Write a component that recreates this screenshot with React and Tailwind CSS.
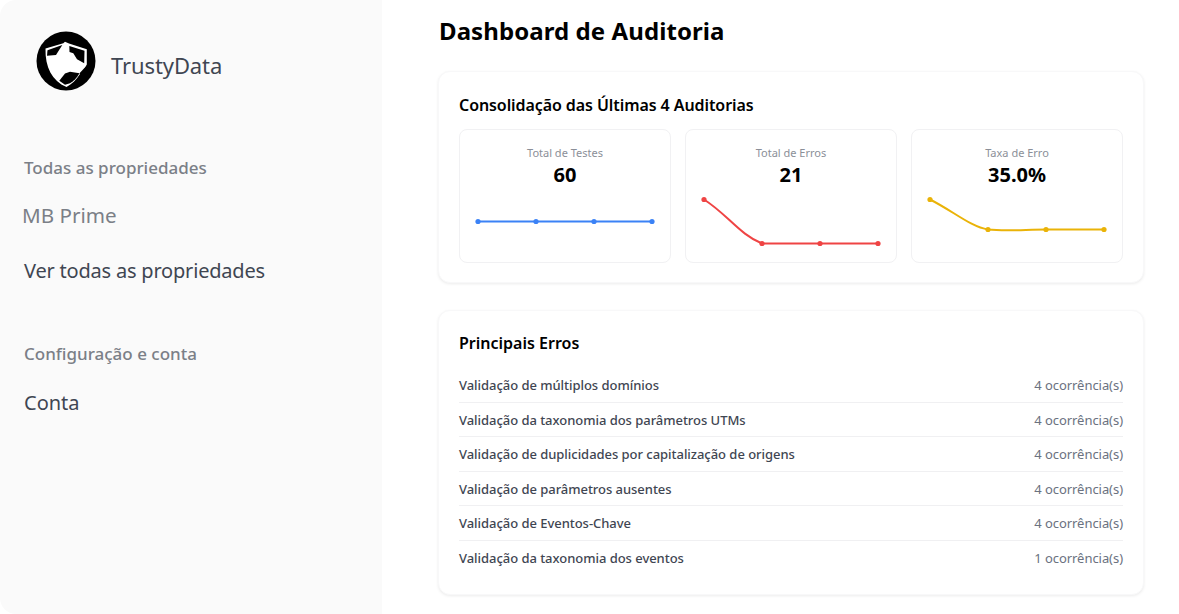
const font = { fontFamily: '"Noto Sans", "Open Sans", sans-serif' };

function Logo() {
  return (
    <svg width="60" height="60" viewBox="0 0 60 60" className="shrink-0">
      <circle cx="30" cy="30" r="29.5" fill="#000" />
      <path d="M9.5 17.5 L27.3 12.3 L29 10.8 L33 12.5 L50.8 18.3 L50.8 33.5 C49 38 46 41 44 43 C40 49 36 53 30.5 56 C16 50 9 36 9.5 17.5 Z" fill="#fff" />
      <path d="M11.5 19.2 L26.3 14 L20 24 L11 24.8 Z" fill="#000" />
      <path d="M33.3 15 L48.5 19.8 L48.2 32.3 L41 28.3 L37.3 22.3 L33.5 21 Z" fill="#000" />
      <path d="M23.3 49.7 L29 42.6 L34 40.8 L43.5 42.3 C41 47 37.5 50.5 34 52.3 L29 53.7 Z" fill="#000" />
      <path d="M43.5 42.3 L50.8 34.5 L52 36 L46 46 Z" fill="#000" />
    </svg>
  );
}

function Spark({ d, points, color }) {
  return (
    <svg width="210" height="74" viewBox="0 0 210 74" className="block shrink-0">
      <path d={d} fill="none" stroke={color} strokeWidth="2" />
      {points.map(([x, y]) => (
        <circle key={x} cx={x} cy={y} r="2.6" fill={color} />
      ))}
    </svg>
  );
}

function Metric({ label, value, d, points, color }) {
  return (
    <div className="w-[212px] h-[134px] border border-[#f1f1f3] rounded-lg flex flex-col items-center pt-[14px]">
      <div className="text-[11px] leading-[18px] text-[#8b8f98]">{label}</div>
      <div className="text-[20px] leading-[26px] font-bold text-black">{value}</div>
      <Spark d={d} points={points} color={color} />
    </div>
  );
}

const errors = [
  ["Validação de múltiplos domínios", "4 ocorrência(s)"],
  ["Validação da taxonomia dos parâmetros UTMs", "4 ocorrência(s)"],
  ["Validação de duplicidades por capitalização de origens", "4 ocorrência(s)"],
  ["Validação de parâmetros ausentes", "4 ocorrência(s)"],
  ["Validação de Eventos-Chave", "4 ocorrência(s)"],
  ["Validação da taxonomia dos eventos", "1 ocorrência(s)"],
];

export default function App() {
  return (
    <div className="flex w-[1179px] h-[614px] bg-white overflow-hidden" style={font}>
      <aside className="w-[382px] h-[614px] shrink-0 bg-[#fafafa] rounded-l-2xl flex flex-col">
        <div className="flex items-center gap-[15px] pl-[36px] pt-[31px]">
          <Logo />
          <span className="text-[22px] leading-[30px] text-[#3f4652] tracking-[-0.1px] translate-y-[4px]">TrustyData</span>
        </div>
        <div className="pl-[24px] mt-[66px] text-[17px] leading-[22px] font-medium text-[#7b7f87]">Todas as propriedades</div>
        <div className="pl-[22px] mt-[22px] text-[20.6px] leading-[28px] text-[#7b7f87]">MB Prime</div>
        <div className="pl-[24px] mt-[28px] text-[20px] leading-[28px] text-[#3f4652] tracking-[-0.2px]">Ver todas as propriedades</div>
        <div className="pl-[24px] mt-[58px] text-[17px] leading-[22px] font-medium text-[#7b7f87]">Configuração e conta</div>
        <div className="pl-[24px] mt-[24px] text-[20px] leading-[28px] text-[#3f4652]">Conta</div>
      </aside>
      <main className="flex-1 pl-[56px] pr-[36px] pt-[13px]">
        <h1 className="pl-[1px] text-[24px] leading-[36px] font-bold text-black tracking-[0.08px]">Dashboard de Auditoria</h1>
        <section className="mt-[22px] h-[212px] rounded-xl bg-white border border-[#f8f8f9] shadow-[0_1px_3px_rgba(0,0,0,0.08)] px-[20px] pt-[21px]">
          <h2 className="text-[16px] leading-[24px] font-semibold text-black tracking-[-0.08px]">Consolidação das Últimas 4 Auditorias</h2>
          <div className="flex gap-[14px] mt-[12px]">
            <Metric label="Total de Testes" value="60" color="#3b82f6" d="M18 33.5 L192 33.5" points={[[18, 33.5], [76, 33.5], [134, 33.5], [192, 33.5]]} />
            <Metric label="Total de Erros" value="21" color="#ef4444" d="M18 11.5 C41 26 54 47 76 55.5 L192 55.5" points={[[18, 11.5], [76, 55.5], [134, 55.5], [192, 55.5]]} />
            <Metric label="Taxa de Erro" value="35.0%" color="#eab308" d="M18 11.5 C41 23 59 39 76 41.5 C94 43.5 114 41.5 134 41.5 L192 41.5" points={[[18, 11.5], [76, 41.5], [134, 41.5], [192, 41.5]]} />
          </div>
        </section>
        <section className="mt-[27px] h-[285px] rounded-xl bg-white border border-[#f8f8f9] shadow-[0_1px_3px_rgba(0,0,0,0.08)] px-[20px] pt-[20px]">
          <h2 className="text-[16px] leading-[24px] font-semibold text-black">Principais Erros</h2>
          <div className="mt-[13px]">
            {errors.map(([name, count], i) => (
              <div key={name} className={`flex justify-between items-center h-[34.6px] ${i < errors.length - 1 ? "border-b border-[#f0f0f2] pt-[2px]" : ""}`}>
                <span className="text-[13px] font-medium text-[#3f4652] tracking-[-0.04px]">{name}</span>
                <span className="text-[13px] text-[#6b7280] tracking-[-0.05px]">{count}</span>
              </div>
            ))}
          </div>
        </section>
      </main>
    </div>
  );
}
